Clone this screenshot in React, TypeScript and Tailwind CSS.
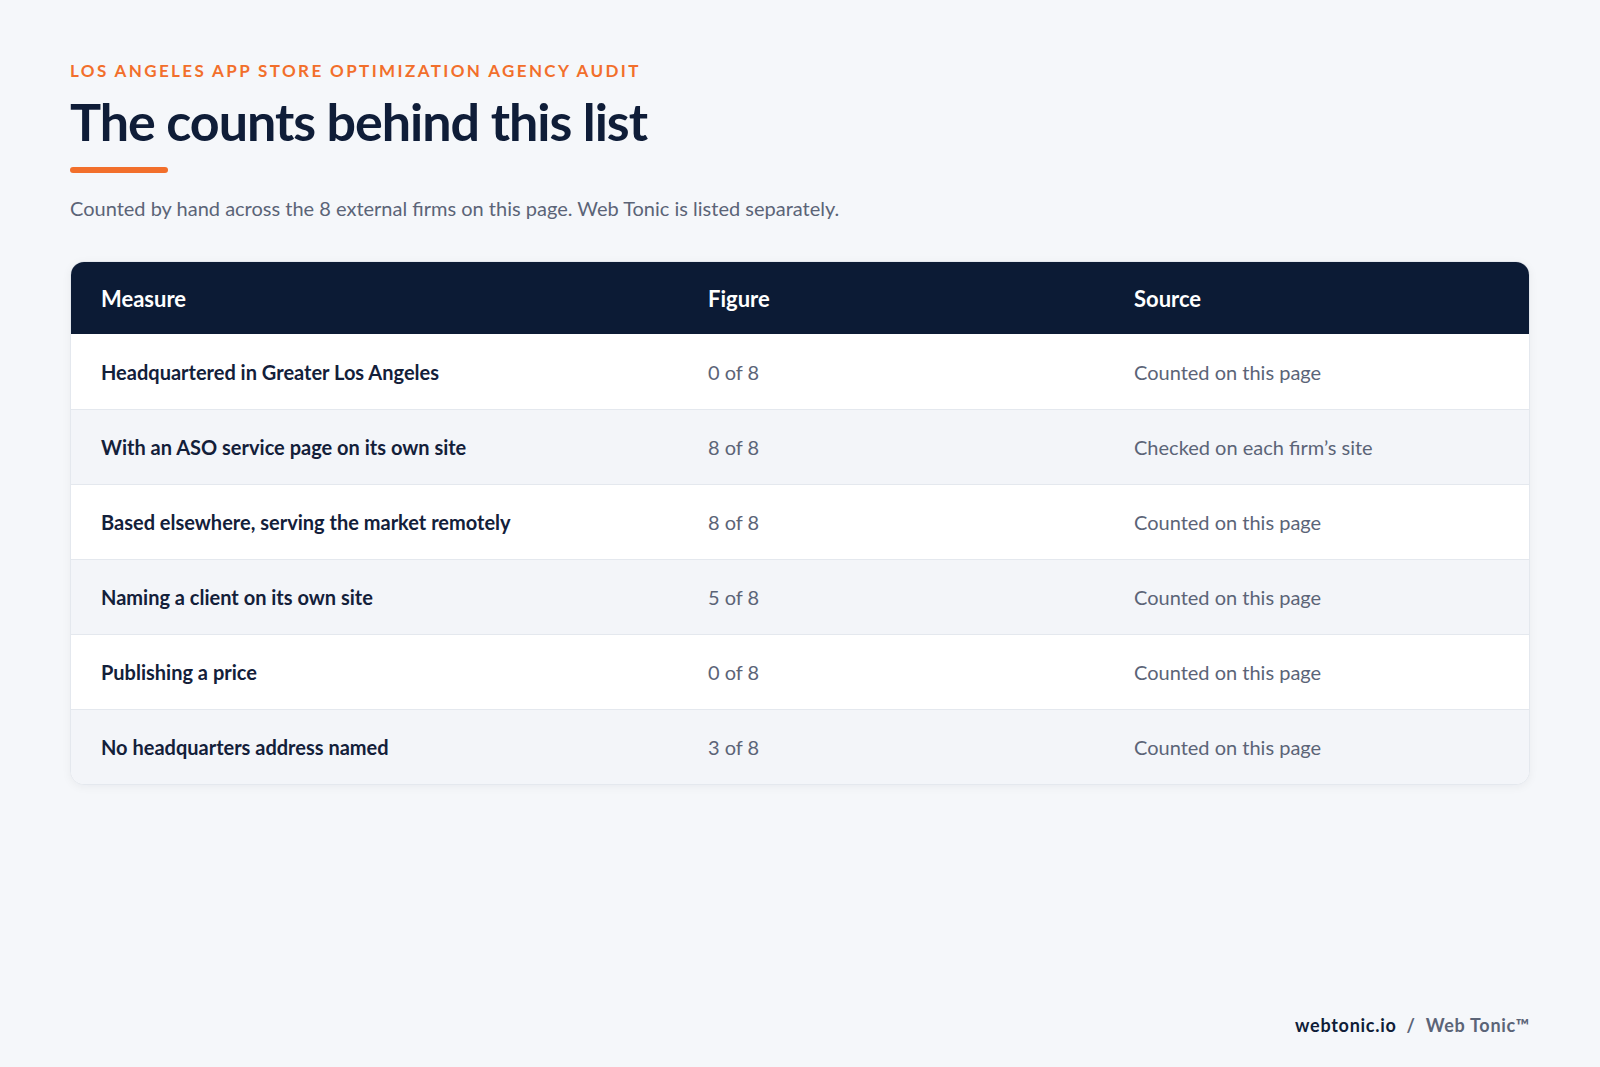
import React from "react";

const rows = [
  { m: "Headquartered in Greater Los Angeles", f: "0 of 8", s: "Counted on this page" },
  { m: "With an ASO service page on its own site", f: "8 of 8", s: "Checked on each firm\u2019s site" },
  { m: "Based elsewhere, serving the market remotely", f: "8 of 8", s: "Counted on this page" },
  { m: "Naming a client on its own site", f: "5 of 8", s: "Counted on this page" },
  { m: "Publishing a price", f: "0 of 8", s: "Counted on this page" },
  { m: "No headquarters address named", f: "3 of 8", s: "Counted on this page" },
];

export default function App() {
  return (
    <div
      className="flex h-[1067px] w-full flex-col bg-[#f5f7fa] px-[70px] pt-[59px]"
      style={{ fontFamily: "Lato, 'Open Sans', 'Liberation Sans', sans-serif" }}
    >
      <div className="text-[17px] font-bold uppercase leading-[24px] tracking-[0.14em] text-[#f26f2b]">
        Los Angeles App Store Optimization Agency Audit
      </div>
      <h1 className="mt-2 text-[52px] font-bold leading-[60px] tracking-[-0.02em] text-[#0f1d38]">
        The counts behind this list
      </h1>
      <div className="mt-4 h-[6px] w-[98px] rounded-full bg-[#f26f2b]" />
      <p className="mt-[21px] text-[20px] leading-[28px] text-[#5b6477]">
        Counted by hand across the 8 external firms on this page. Web Tonic is listed separately.
      </p>

      <div className="mt-[39px] overflow-hidden rounded-[14px] border border-[#e4e8ee] bg-white shadow-[0_2px_10px_rgba(15,23,42,0.05)]">
        <div className="grid h-[72px] grid-cols-[607px_426px_1fr] items-center bg-[#0c1b35] text-[22px] font-bold text-white">
          <div className="px-[30px]">Measure</div>
          <div className="px-[30px]">Figure</div>
          <div className="px-[30px]">Source</div>
        </div>
        {rows.map((r, i) => (
          <div
            key={i}
            className={
              "grid h-[75px] grid-cols-[607px_426px_1fr] items-center text-[20px] " +
              (i > 0 ? "border-t border-[#e4e8ee] " : "") +
              (i % 2 === 1 ? "bg-[#f3f5f9]" : "bg-white")
            }
          >
            <div className="px-[30px] font-bold text-[#13203a]">{r.m}</div>
            <div className="px-[30px] text-[#5b6477]">{r.f}</div>
            <div className="px-[30px] text-[#5b6477]">{r.s}</div>
          </div>
        ))}
      </div>

      <div className="mt-auto flex justify-end pb-[30px] text-[18px] font-bold leading-[24px] tracking-[0.04em]">
        <span className="text-[#0f1d38]">webtonic.io</span>
        <span className="px-[10px] text-[#5b6477]">/</span>
        <span className="text-[#5b6477]">Web Tonic&trade;</span>
      </div>
    </div>
  );
}
